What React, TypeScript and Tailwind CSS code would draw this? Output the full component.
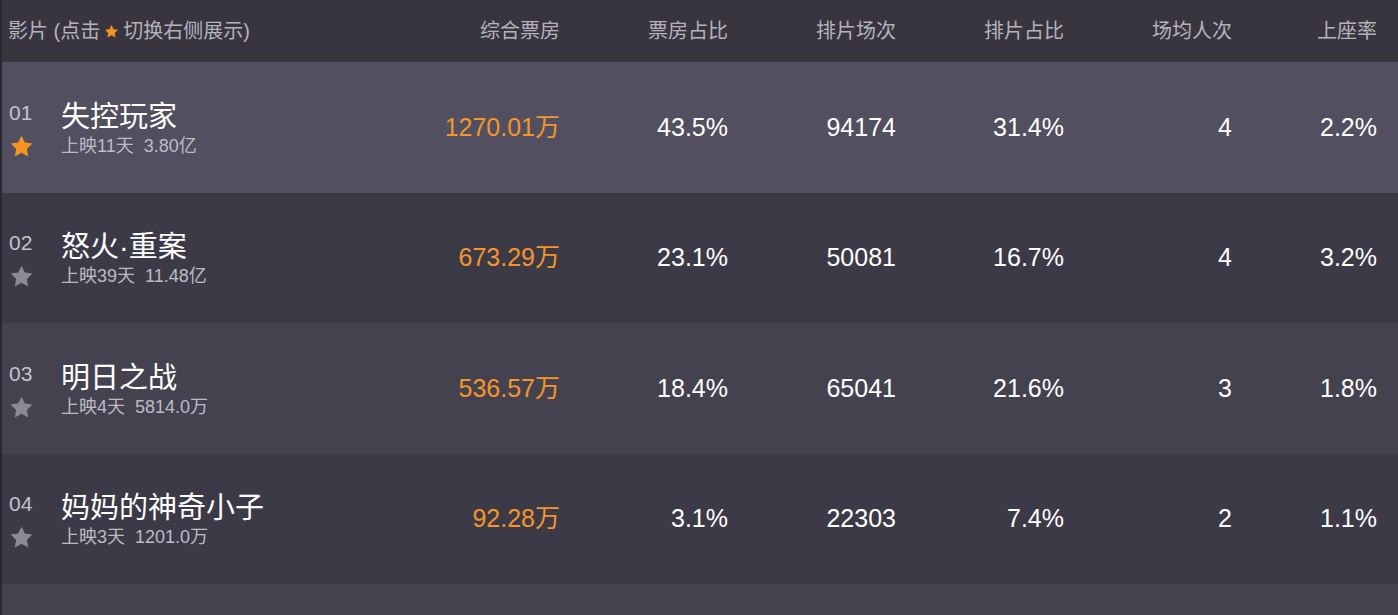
import * as React from "react";

const movies = [
  { rank: "01", name: "失控玩家", days: "上映11天", total: "3.80亿", box: "1270.01万", boxRate: "43.5%", shows: "94174", showRate: "31.4%", avg: "4", seat: "2.2%", active: true },
  { rank: "02", name: "怒火·重案", days: "上映39天", total: "11.48亿", box: "673.29万", boxRate: "23.1%", shows: "50081", showRate: "16.7%", avg: "4", seat: "3.2%", active: false },
  { rank: "03", name: "明日之战", days: "上映4天", total: "5814.0万", box: "536.57万", boxRate: "18.4%", shows: "65041", showRate: "21.6%", avg: "3", seat: "1.8%", active: false },
  { rank: "04", name: "妈妈的神奇小子", days: "上映3天", total: "1201.0万", box: "92.28万", boxRate: "3.1%", shows: "22303", showRate: "7.4%", avg: "2", seat: "1.1%", active: false },
];

const rowBg = ["bg-[#514f60]", "bg-[#3d3a48]", "bg-[#45424f]", "bg-[#3d3a48]"];

function Star({ className }: { className?: string }) {
  return (
    <svg viewBox="0 0 24 24" className={className} fill="currentColor">
      <path d="M12 1.6l3.2 6.6 7.2 1-5.2 5.1 1.2 7.2L12 18.1l-6.4 3.4 1.2-7.2L1.6 9.2l7.2-1z" />
    </svg>
  );
}

export default function App() {
  const headers = ["综合票房", "票房占比", "排片场次", "排片占比", "场均人次"];

  return (
    <div
      className="w-[1398px] h-[615px] overflow-hidden bg-[#45424f] border-l-2 border-[#2a2830]"
      style={{ fontFamily: '"Liberation Sans", "Noto Sans CJK SC", sans-serif' }}
    >
      <div className="flex items-center h-[62px] bg-[#38353f] text-[#b5b2bd] text-[20px]">
        <div className="w-[390px] pl-[6px] flex items-center">
          <span>影片 (点击</span>
          <Star className="w-[15px] h-[15px] mx-[4px] text-[#f7931e]" />
          <span>切换右侧展示)</span>
        </div>
        {headers.map((h) => (
          <div key={h} className="w-[168px] text-right">{h}</div>
        ))}
        <div className="w-[145px] text-right">上座率</div>
      </div>

      {movies.map((m, i) => (
        <div key={m.rank} className={`flex items-center h-[130.5px] ${rowBg[i]}`}>
          <div className="w-[390px] pl-[7px] pt-[2px] flex flex-col">
            <div className="flex items-center h-[36px]">
              <span className="w-[52px] text-[21px] text-[#c4c2ca] mb-[4px]">{m.rank}</span>
              <span className="text-[29px] text-white leading-none mt-[6px]">{m.name}</span>
            </div>
            <div className="flex items-center h-[28px]">
              <div className="w-[52px]">
                <Star className={`w-[25px] h-[25px] ${m.active ? "text-[#f7931e]" : "text-[#8c8997]"}`} />
              </div>
              <span className="text-[18px] text-[#bdbac5]">{m.days}</span>
              <span className="text-[18px] text-[#bdbac5] ml-[10px]">{m.total}</span>
            </div>
          </div>
          <div className="w-[168px] text-right text-[25px] text-[#f5952a]">{m.box}</div>
          <div className="w-[168px] text-right text-[25px] text-white">{m.boxRate}</div>
          <div className="w-[168px] text-right text-[25px] text-white">{m.shows}</div>
          <div className="w-[168px] text-right text-[25px] text-white">{m.showRate}</div>
          <div className="w-[168px] text-right text-[25px] text-white">{m.avg}</div>
          <div className="w-[145px] text-right text-[25px] text-white">{m.seat}</div>
        </div>
      ))}
    </div>
  );
}
